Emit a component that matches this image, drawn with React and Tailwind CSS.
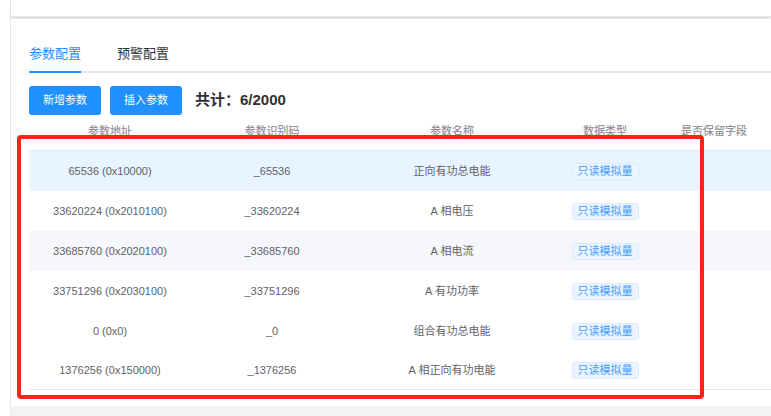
import React from "react";

const rows = [
  { addr: "65536 (0x10000)", code: "_65536", name: "正向有功总电能" },
  { addr: "33620224 (0x2010100)", code: "_33620224", name: "A 相电压" },
  { addr: "33685760 (0x2020100)", code: "_33685760", name: "A 相电流" },
  { addr: "33751296 (0x2030100)", code: "_33751296", name: "A 有功功率" },
  { addr: "0 (0x0)", code: "_0", name: "组合有功总电能" },
  { addr: "1376256 (0x150000)", code: "_1376256", name: "A 相正向有功电能" },
];

// row backgrounds as in the screenshot: hovered first row, striped third
const rowBg = ["bg-[#e8f4ff]", "bg-white", "bg-[#f5f7fa]", "bg-white", "bg-white", "bg-white"];

function Tag({ children }) {
  return (
    <span className="inline-flex h-[17px] items-center rounded-[3px] border border-[#d9ecff] bg-[#ecf5ff] px-[5px] text-[11px] text-[#409eff]">
      {children}
    </span>
  );
}

export default function App() {
  return (
    <div
      className="relative flex h-[416px] w-[771px] overflow-hidden bg-white"
      style={{ fontFamily: '"Liberation Sans", "Noto Sans CJK SC", sans-serif' }}
    >
      <div className="w-[10px] shrink-0 bg-white" />
      <div className="flex flex-1 flex-col border-l border-[#e4e7ed] bg-[#f2f3f5]">
        {/* top card */}
        <div className="h-[17px] shrink-0 border-b border-[#e4e7ed] bg-white shadow-sm" />

        {/* main card */}
        <div className="mt-[2px] flex h-[387px] flex-col bg-white pl-[18px] pt-[18px]">
          {/* tabs */}
          <div className="flex h-[36px] gap-[36px] border-b-2 border-[#e4e7ed] text-[13px]">
            <div className="-mb-[2px] flex items-center border-b-2 border-[#1890ff] text-[#1890ff]">参数配置</div>
            <div className="flex items-center text-[#303133]">预警配置</div>
          </div>

          {/* actions */}
          <div className="mt-[13px] flex h-[29px] items-center">
            <button className="h-[29px] w-[72px] rounded-[3px] bg-[#1e90ff] text-[11px] text-white">新增参数</button>
            <button className="ml-[9px] h-[29px] w-[72px] rounded-[3px] bg-[#1e90ff] text-[11px] text-white">插入参数</button>
            <span className="ml-[13px] text-[15px] font-bold text-[#303133]">共计：6/2000</span>
          </div>

          {/* table */}
          <div className="text-[11px]">
            <div className="flex h-[35px] items-center pb-[2px] font-medium text-[#909399]">
              <div className="w-[162px] shrink-0 text-center">参数地址</div>
              <div className="w-[162px] shrink-0 text-center">参数识别码</div>
              <div className="w-[198px] shrink-0 text-center">参数名称</div>
              <div className="w-[108px] shrink-0 text-center">数据类型</div>
              <div className="w-[110px] shrink-0 text-center">是否保留字段</div>
            </div>
            <div className="border-y border-[#e4e7ed] text-[#606266]">
              {rows.map((r, i) => (
                <div
                  key={r.code}
                  className={`flex items-center ${i === rows.length - 1 ? "h-[38px]" : "h-[40px]"} ${rowBg[i]}`}
                >
                  <div className="w-[162px] shrink-0 text-center">{r.addr}</div>
                  <div className="w-[162px] shrink-0 text-center">{r.code}</div>
                  <div className="w-[198px] shrink-0 text-center">{r.name}</div>
                  <div className="w-[108px] shrink-0 text-center">
                    <Tag>只读模拟量</Tag>
                  </div>
                  <div className="w-[110px] shrink-0" />
                </div>
              ))}
            </div>
          </div>
        </div>
      </div>

      {/* red annotation frame over the table */}
      <div className="pointer-events-none absolute left-[17px] top-[135px] h-[264px] w-[687px] rounded-[4px] border-[4px] border-[#ff2218]" />
    </div>
  );
}
